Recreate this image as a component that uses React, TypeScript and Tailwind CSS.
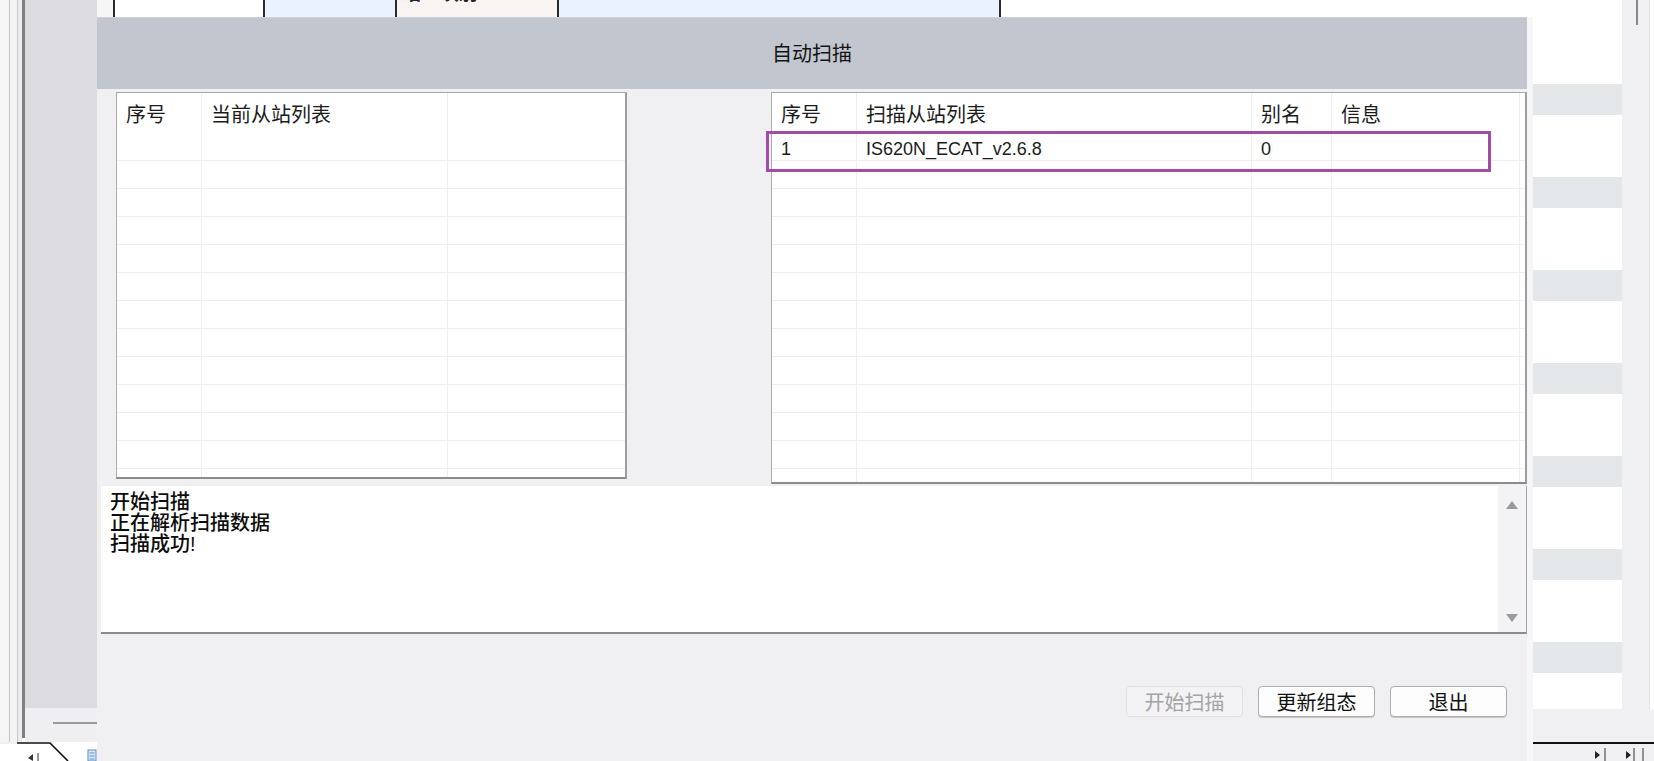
import React from 'react';

type Col = { w: string; label: string; line: boolean };

const leftCols: Col[] = [
  { w: 'w-[85px]', label: '序号', line: true },
  { w: 'w-[246px]', label: '当前从站列表', line: true },
  { w: 'flex-1', label: '', line: false },
];

const rightCols: Col[] = [
  { w: 'w-[85px]', label: '序号', line: true },
  { w: 'w-[395px]', label: '扫描从站列表', line: true },
  { w: 'w-[80px]', label: '别名', line: true },
  { w: 'w-[188px]', label: '信息', line: true },
  { w: 'flex-1', label: '', line: false },
];

const slaves = [['1', 'IS620N_ECAT_v2.6.8', '0', '', '']];

const logLines = ['开始扫描', '正在解析扫描数据', '扫描成功!'];

const Grid: React.FC<{ cols: Col[]; rows: string[][]; className: string }> = ({ cols, rows, className }) => {
  const data = Array.from({ length: 13 }, (_, i) => rows[i] ?? cols.map(() => ''));
  return (
    <div
      className={`flex flex-col overflow-hidden bg-white border-t border-l border-r-2 border-b-2 border-[#ababab] border-r-[#9c9c9c] border-b-[#8c8c8c] ${className}`}
    >
      <div className="flex h-[40px] shrink-0">
        {cols.map((c, i) => (
          <div
            key={i}
            className={`${c.w} shrink-0 ${c.line ? 'border-r border-[#efeff2]' : ''} pl-[9px] pt-[8px] text-[20px] leading-[28px] text-[#1b1b1b]`}
          >
            {c.label}
          </div>
        ))}
      </div>
      {data.map((r, ri) => (
        <div key={ri} className="flex h-[28px] shrink-0 border-b border-[#efeff2]">
          {cols.map((c, i) => (
            <div
              key={i}
              className={`${c.w} shrink-0 ${c.line ? 'border-r border-[#efeff2]' : ''} pl-[9px] pt-[5px] text-[18px] leading-[22px] text-[#1b1b1b]`}
            >
              {r[i]}
            </div>
          ))}
        </div>
      ))}
    </div>
  );
};

const Button: React.FC<{ label: string; disabled?: boolean }> = ({ label, disabled }) => (
  <button
    className={`w-[117px] h-[31px] rounded-[4px] border text-[20px] leading-[20px] pt-[2px] ${
      disabled
        ? 'bg-[#f3f2f5] border-[#e0e0e3] text-[#a3a3a3]'
        : 'bg-[#fdfdfd] border-[#adadad] text-[#111111] shadow-[0_1px_0_#c8c8c8]'
    }`}
  >
    {label}
  </button>
);

const LeftPane = () => (
  <div className="w-[97px] h-full flex flex-col shrink-0">
    <div className="flex h-[742px]">
      <div className="w-[9px] bg-[#f5f5f6]" />
      <div className="w-px bg-[#c4c4c6]" />
      <div className="w-[7px] bg-[#f3f3f5]" />
      <div className="w-px bg-[#c8c8ca]" />
      <div className="w-[4px] bg-[#ececee]" />
      <div className="w-[3px] flex flex-col">
        <div className="h-[738px] bg-[#7f7f7f]" />
      </div>
      <div className="flex-1 flex flex-col">
        <div className="h-[708px] bg-[#dcdbdf]" />
        <div className="flex-1 bg-[#efeef1] flex flex-col items-end pt-[14px]">
          <div className="w-[44px] h-[2px] bg-[#9a9a9a]" />
        </div>
      </div>
    </div>
    <svg width="97" height="19" viewBox="0 0 97 19" className="block bg-white">
      <path d="M0 1 H17" stroke="#f0f0f0" strokeWidth="2" />
      <path d="M17 1 H50 L68 19" fill="none" stroke="#111" strokeWidth="1.6" />
      <path d="M33 12 L28 16 L33 19 Z" fill="#333" />
      <path d="M38 11 V19" stroke="#333" strokeWidth="1" />
      <rect x="88" y="8" width="8" height="11" fill="#dbe9f7" stroke="#5b8fc7" strokeWidth="1" />
      <path d="M89.5 11 H94.5 M89.5 14 H94.5 M89.5 17 H94.5" stroke="#5b8fc7" strokeWidth="1" />
    </svg>
  </div>
);

const TopStrip = () => (
  <div className="flex h-[17px] shrink-0">
    <div className="w-[16px] bg-[#f6f6f7]" />
    <div className="w-[2px] bg-[#2a2a2a]" />
    <div className="w-[148px] bg-white" />
    <div className="w-[2px] bg-[#2a2a2a]" />
    <div className="w-[130px] bg-[#eaf3fd]" />
    <div className="w-[2px] bg-[#2a2a2a]" />
    <div className="w-[160px] bg-[#f8f4f2] overflow-hidden">
      <div className="-mt-[19px] pl-[4px] text-[20px] leading-[24px] font-bold text-[#222]">站 - 映射</div>
    </div>
    <div className="w-[2px] bg-[#2a2a2a]" />
    <div className="w-[440px] bg-[#eaf3fd]" />
    <div className="w-[2px] bg-[#2a2a2a]" />
    <div className="flex-1 bg-white" />
  </div>
);

const RightPane = () => (
  <div className="w-[121px] h-full flex flex-col shrink-0">
    <div className="flex h-[709px]">
      <div className="w-[89px] flex flex-col bg-white">
        {Array.from({ length: 7 }, (_, i) => [
          <div key={`w${i}`} className={`${i === 0 ? 'h-[84px]' : 'h-[62px]'} shrink-0`} />,
          <div key={`b${i}`} className="h-[31px] shrink-0 bg-[#e4e7ea]" />,
        ]).flat()}
      </div>
      <div className="flex-1 bg-[#f0eff2] flex">
        <div className="w-[14px]" />
        <div className="w-[2px] h-[25px] bg-[#8a8a8a]" />
        <div className="flex-1" />
        <div className="w-px bg-[#e2e2e5]" />
        <div className="w-[4px] bg-white" />
      </div>
    </div>
    <div className="flex-1 bg-[#f0eff2] flex flex-col">
      <div className="h-[33px]" />
      <div className="h-[2px] bg-[#111]" />
      <svg width="121" height="17" viewBox="0 0 121 17" className="block">
        <path d="M62 7 L67 11 L62 15 Z" fill="#222" />
        <path d="M72 4 V17" stroke="#333" strokeWidth="1" />
        <path d="M93 7 L98 11 L93 15 Z" fill="#222" />
        <path d="M101 4 V17" stroke="#333" strokeWidth="1" />
        <path d="M110 4 V17" stroke="#333" strokeWidth="1" />
      </svg>
    </div>
  </div>
);

export default function App() {
  return (
    <div className="relative w-[1654px] h-[761px] overflow-hidden bg-white font-['Liberation_Sans','Noto_Sans_CJK_SC',sans-serif]">
      {/* application behind the dialog */}
      <div className="absolute inset-0 flex">
        <LeftPane />
        <div className="flex-1 flex flex-col">
          <TopStrip />
          <div className="flex-1 bg-[#f0eff2]" />
        </div>
        <RightPane />
      </div>

      {/* dialog window */}
      <div className="absolute left-[97px] top-[17px] w-[1436px] h-[744px] bg-[#f0eff2] border-r-[6px] border-[#f6f6f8] flex flex-col">
        <div className="h-[72px] shrink-0 bg-[#c2c6ce] border-t border-[#cfd2d8] flex items-center justify-center text-[20px] text-[#141414]">
          自动扫描
        </div>

        <div className="flex items-start mt-[3px]">
          <Grid cols={leftCols} rows={[]} className="ml-[19px] w-[511px] h-[387px]" />
          <div className="relative ml-[144px]">
            <Grid cols={rightCols} rows={slaves} className="w-[756px] h-[392px]" />
            <div className="absolute left-[-5px] top-[39px] w-[725px] h-[41px] border-[3px] border-[#a24ca6]" />
          </div>
        </div>

        <div className="ml-[4px] mt-[2px] h-[148px] flex bg-white border-b-2 border-r border-[#8c8c8c] border-r-[#a4a4a4]">
          <div className="flex-1 pl-[9px] pt-[6px] text-[20px] leading-[21px] font-medium text-[#0c0c0c]">
            {logLines.map((l) => (
              <div key={l}>{l}</div>
            ))}
          </div>
          <div className="w-[28px] bg-[#f3f2f5] flex flex-col items-center justify-between pt-[15px] pb-[10px]">
            <svg width="12" height="8" viewBox="0 0 12 8">
              <path d="M6 0 L12 8 H0 Z" fill="#9b9b9b" />
            </svg>
            <svg width="12" height="8" viewBox="0 0 12 8">
              <path d="M0 0 H12 L6 8 Z" fill="#9b9b9b" />
            </svg>
          </div>
        </div>

        <div className="mt-[52px] flex justify-end gap-[15px] pr-[20px]">
          <Button label="开始扫描" disabled />
          <Button label="更新组态" />
          <Button label="退出" />
        </div>
      </div>
    </div>
  );
}
